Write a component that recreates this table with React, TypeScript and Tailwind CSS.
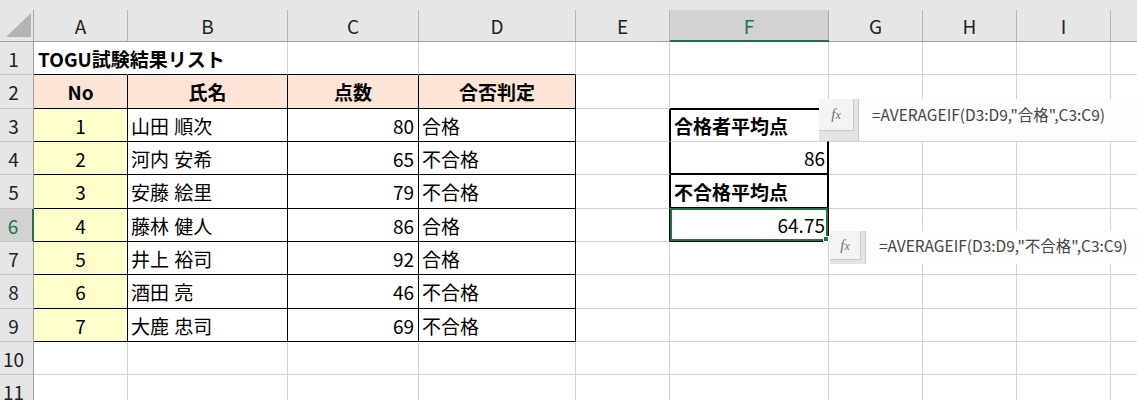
import React from "react";

const COLS = ["A", "B", "C", "D", "E", "F", "G", "H", "I", "J"];
const ROW_H = ["h-[33px]", "h-[34px]", "h-[33px]", "h-[33px]", "h-[34px]", "h-[33px]", "h-[33px]", "h-[34px]", "h-[33px]", "h-[33px]", "h-[34px]"];

const names = ["山田 順次", "河内 安希", "安藤 絵里", "藤林 健人", "井上 裕司", "酒田 亮", "大鹿 忠司"];
const scores = [80, 65, 79, 86, 92, 46, 69];
const results = ["合格", "不合格", "不合格", "合格", "合格", "不合格", "不合格"];

const GRID = "grid grid-cols-[34px_94px_160px_131px_157px_94px_159px_94px_94px_94px_1fr]";
const FONT = "font-['Noto_Sans_CJK_JP',sans-serif]";

function cellClasses(r: number, c: string): string {
  const inT = r >= 2 && r <= 9 && "ABCD".includes(c);
  let right = "border-r border-r-[#d4d4d4]";
  if (inT) right = "border-r border-r-black";
  if (r === 1 && c === "A") right = "border-r border-r-transparent";
  if (c === "E" && r >= 3 && r <= 6) right = "border-r border-r-black";
  if (c === "F" && r >= 3 && r <= 6) right = "border-r-2 border-r-black";
  if (c === "J") right = "";
  let bottom = "border-b border-b-[#d4d4d4]";
  if (r >= 1 && r <= 9 && "ABCD".includes(c)) bottom = "border-b border-b-black";
  if (c === "F" && r === 2) bottom = "border-b border-b-black";
  if (c === "F" && (r === 4 || r === 5 || r === 6)) bottom = "border-b-2 border-b-black";
  let extra = "";
  if (c === "F" && r >= 3 && r <= 6) extra += " border-l border-l-black";
  if (c === "F" && r === 3) extra += " border-t border-t-black";
  let bg = "";
  if (r === 2 && "ABCD".includes(c)) bg = " bg-[#fce4d6]";
  if (r >= 3 && r <= 9 && c === "A") bg = " bg-[#ffffcc]";
  return `flex items-center whitespace-nowrap text-[19px] leading-none text-black ${right} ${bottom}${extra}${bg}`;
}

function cellContent(r: number, c: string): React.ReactNode {
  if (r === 1 && c === "A") return <span className="pl-[4px] font-bold">TOGU試験結果リスト</span>;
  if (r === 2) {
    if (c === "A") return <span className="w-full text-center font-bold">No</span>;
    if (c === "B") return <span className="w-full text-center font-bold">氏名</span>;
    if (c === "C") return <span className="w-full text-center font-bold">点数</span>;
    if (c === "D") return <span className="w-full text-center font-bold">合否判定</span>;
  }
  if (r >= 3 && r <= 9) {
    const i = r - 3;
    if (c === "A") return <span className="w-full text-center">{i + 1}</span>;
    if (c === "B") return <span className="pl-[3px] [word-spacing:1px]">{names[i]}</span>;
    if (c === "C") return <span className="w-full text-right pr-[4px]">{scores[i]}</span>;
    if (c === "D") return <span className="pl-[3px]">{results[i]}</span>;
  }
  if (c === "F") {
    if (r === 3) return <span className="pl-[3px] font-bold">合格者平均点</span>;
    if (r === 4) return <span className="w-full text-right pr-[2px]">86</span>;
    if (r === 5) return <span className="pl-[3px] font-bold">不合格平均点</span>;
    if (r === 6)
      return (
        <>
          <span className="w-full text-right pr-[2px]">64.75</span>
          <div className="absolute -inset-px z-10 border-2 border-[#217346]">
            <div className="absolute -right-[3px] -bottom-[3px] w-[6px] h-[6px] bg-[#217346] border border-white" />
          </div>
        </>
      );
  }
  return null;
}

function FormulaBar({
  left,
  top,
  width,
  height,
  fxW,
  fxH,
  formula,
}: {
  left: string;
  top: string;
  width: string;
  height: string;
  fxW: string;
  fxH: string;
  formula: string;
}) {
  return (
    <div className={`absolute z-20 flex gap-[4px] bg-[#e4e4e4] ${left} ${top} ${width} ${height}`}>
      <div className={`flex flex-col ${fxW}`}>
        <div className={`flex items-center justify-center bg-[#f4f4f4] border-r border-b border-[#c9c9c9] ${fxH}`}>
          <span className="font-['Liberation_Serif',serif] italic text-[15px] text-[#6f6f6f] leading-none">
            f<span className="text-[12px]">x</span>
          </span>
        </div>
      </div>
      <div className="flex-1 bg-[#fdfdfd] border-l border-[#c9c9c9]">
        <div className={`flex items-center pl-[13px] ${fxH}`}>
          <span className={`${FONT} text-[15.5px] leading-none text-[#444] whitespace-nowrap`}>{formula}</span>
        </div>
      </div>
    </div>
  );
}

export default function App() {
  return (
    <div className={`relative w-[1137px] h-[400px] overflow-hidden bg-white ${FONT}`}>
      {/* column headers */}
      <div className={`${GRID} h-[42px] bg-[#e6e6e6]`}>
        <div className="h-[42px] pt-[10px] border-b border-b-[#a0a0a0]">
          <div className="relative h-full border-r border-r-[#a8a8a8]">
            <svg className="absolute left-[6px] top-[3px]" width="26" height="25" viewBox="0 0 26 25">
              <polygon points="25,0 25,24 0,24" fill="#b4b4b4" />
            </svg>
          </div>
        </div>
        {COLS.map((c) =>
          c === "F" ? (
            <div key={c} className="h-[42px] pt-[10px] border-b-2 border-b-[#217346]">
              <div className="h-full flex items-center justify-center bg-[#d2d2d2] border-r border-r-[#a8a8a8] text-[19px] leading-none text-[#217346]">
                {c}
              </div>
            </div>
          ) : (
            <div key={c} className="h-[42px] pt-[10px] border-b border-b-[#a0a0a0]">
              <div
                className={`h-full flex items-center justify-center text-[19px] leading-none text-[#222] ${
                  c === "J" ? "" : "border-r border-r-[#b4b4b4]"
                }`}
              >
                {c === "J" ? "" : c}
              </div>
            </div>
          )
        )}
      </div>
      {/* rows */}
      {ROW_H.map((h, idx) => {
        const r = idx + 1;
        return (
          <div key={r} className={`${GRID} ${h}`}>
            {r === 6 ? (
              <div className="flex items-center justify-center pr-[6px] bg-[#d2d2d2] border-r-2 border-r-[#217346] border-b border-b-[#c6c6c6] text-[19px] leading-none text-[#217346]">
                {r}
              </div>
            ) : (
              <div className="flex items-center justify-center pr-[6px] bg-[#e6e6e6] border-r border-r-[#a0a0a0] border-b border-b-[#c6c6c6] text-[19px] leading-none text-[#222]">
                {r}
              </div>
            )}
            {COLS.map((c) => (
              <div key={c} className={`${c === "F" && r === 6 ? "relative " : ""}${cellClasses(r, c)}`}>
                {cellContent(r, c)}
              </div>
            ))}
          </div>
        );
      })}
      <FormulaBar
        left="left-[819px]"
        top="top-[99px]"
        width="w-[318px]"
        height="h-[42px]"
        fxW="w-[35px]"
        fxH="h-[32px]"
        formula={'=AVERAGEIF(D3:D9,"合格",C3:C9)'}
      />
      <FormulaBar
        left="left-[830px]"
        top="top-[231px]"
        width="w-[307px]"
        height="h-[33px]"
        fxW="w-[31px]"
        fxH="h-[29px]"
        formula={'=AVERAGEIF(D3:D9,"不合格",C3:C9)'}
      />
    </div>
  );
}
